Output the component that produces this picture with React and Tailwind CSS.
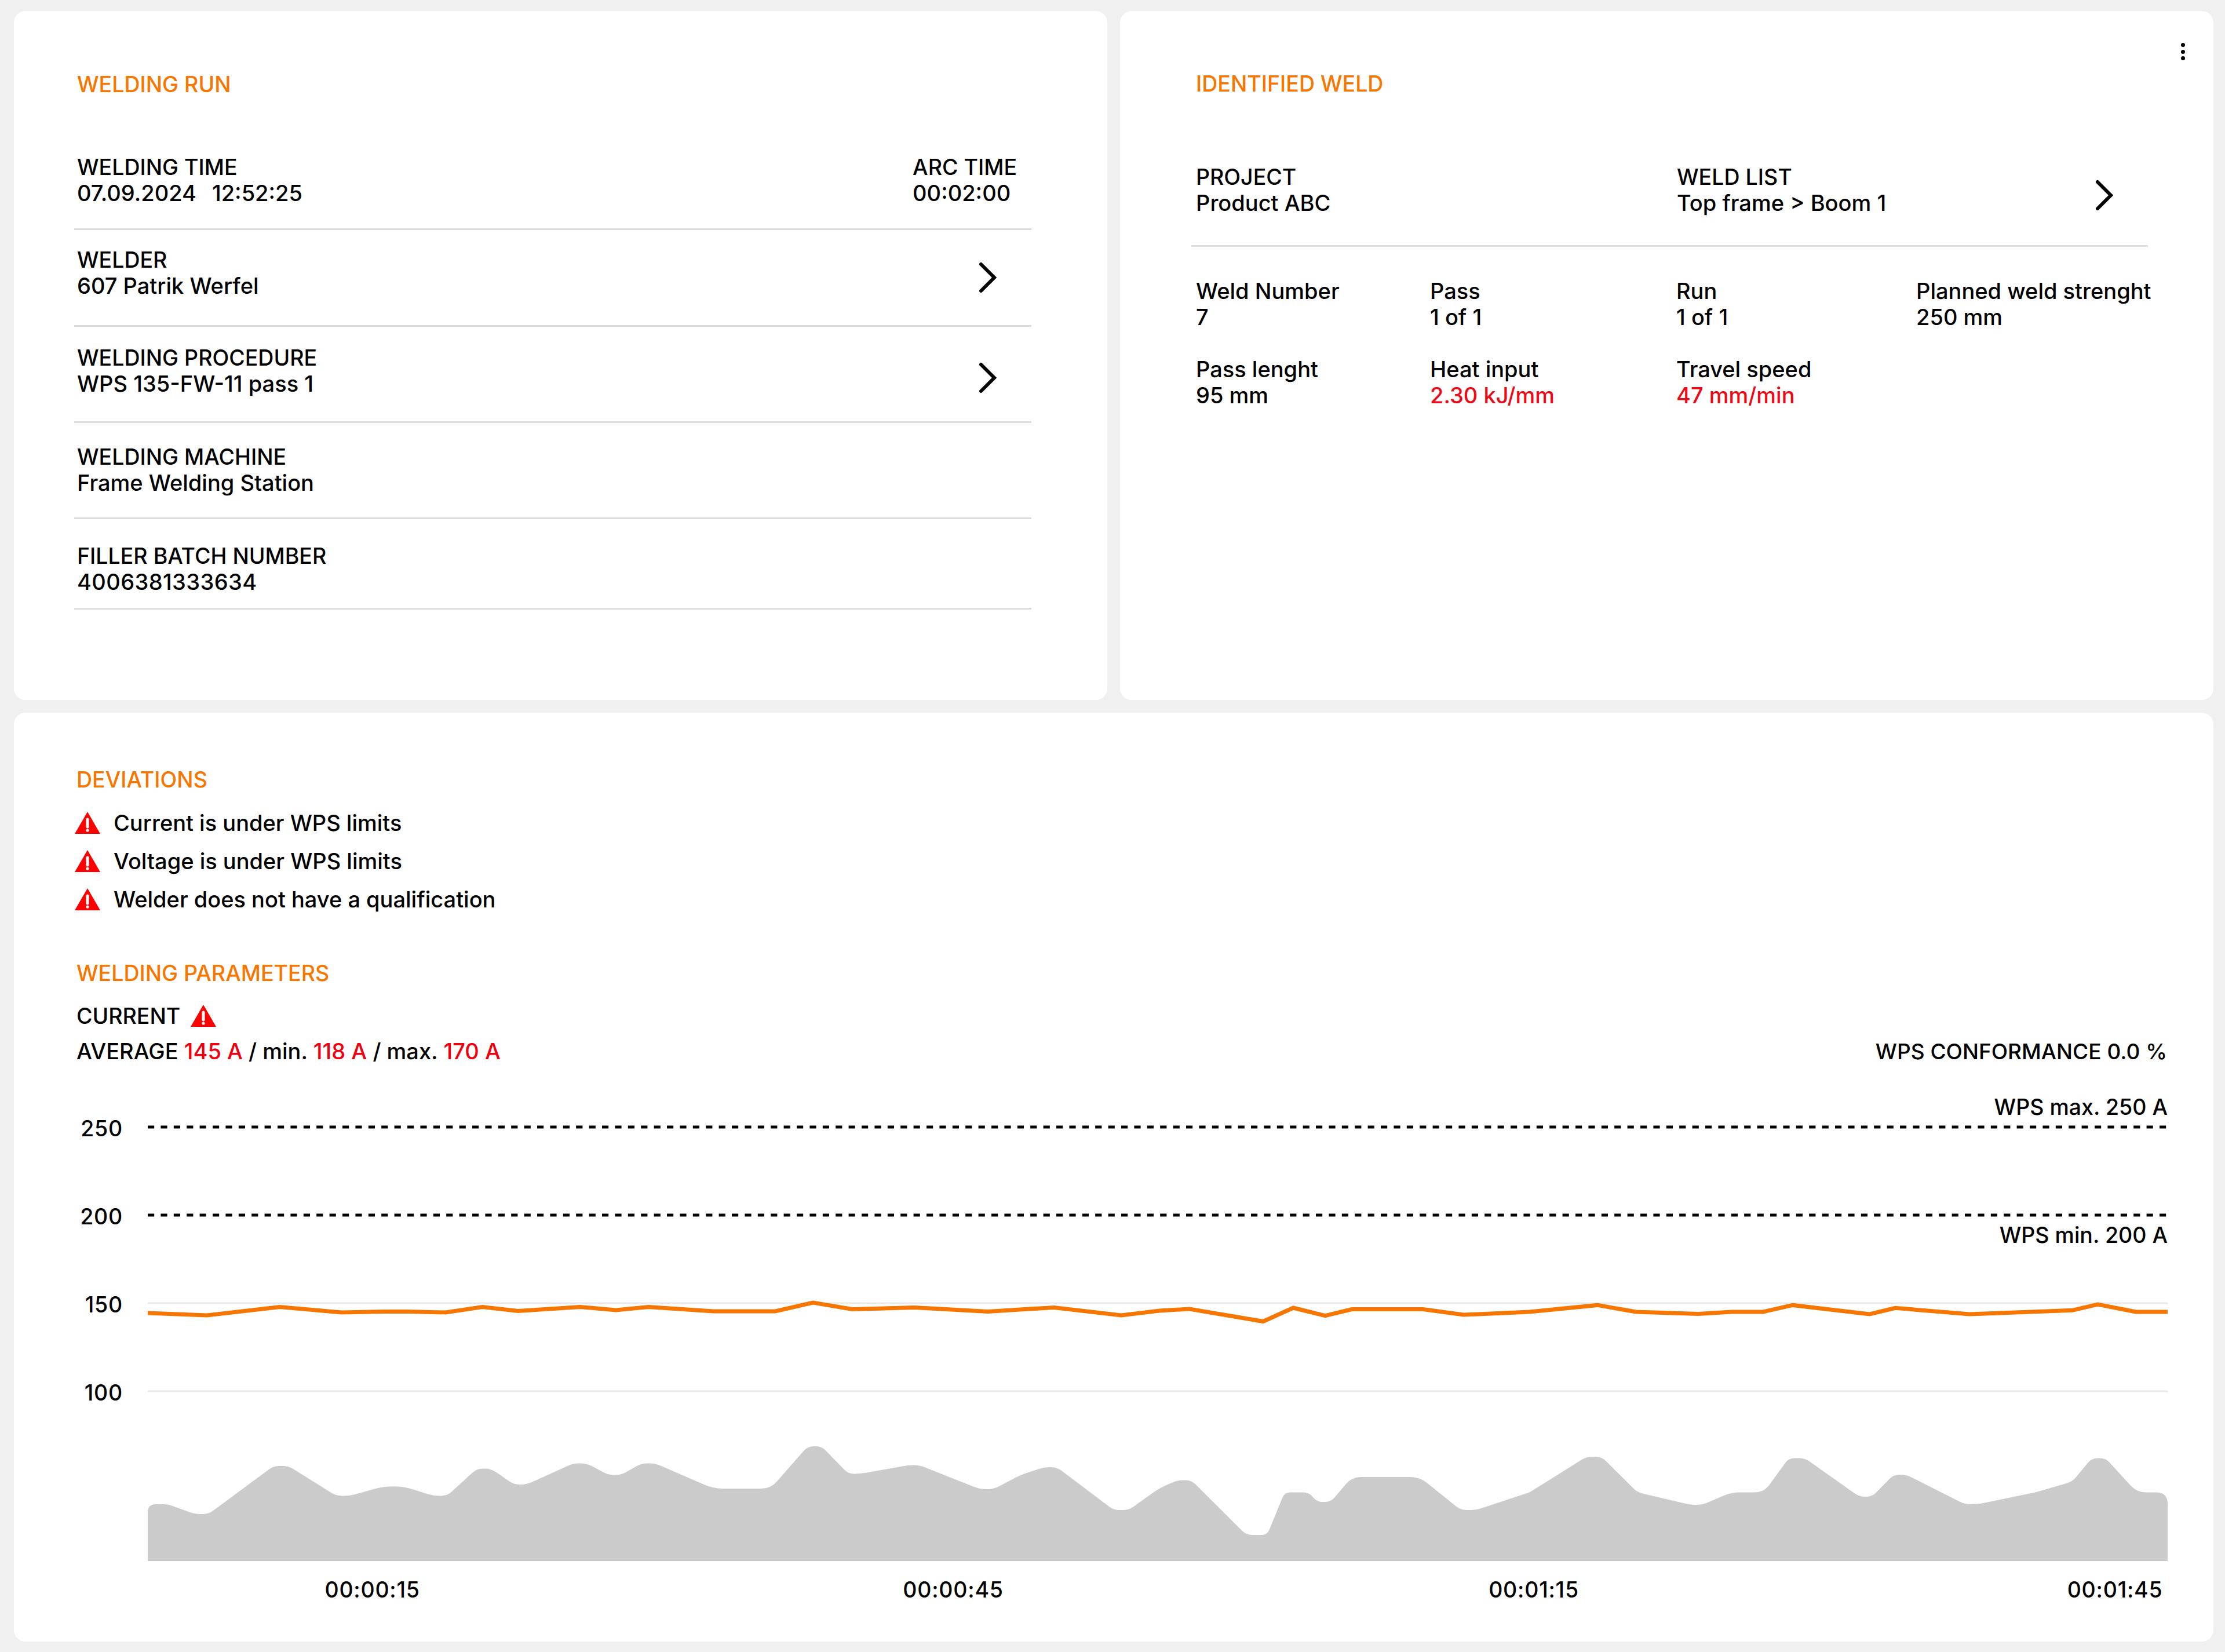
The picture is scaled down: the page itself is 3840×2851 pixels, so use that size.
const linePoints = [
  [255, 2266], [357, 2270], [483, 2255.5], [589, 2265], [663, 2263.5], [705, 2263.5], [769, 2265], [832.5, 2255.5],
  [894, 2262.6], [1001, 2255.5], [1063, 2261], [1119, 2255.5], [1231, 2263], [1338, 2263], [1403, 2248], [1471, 2259.5],
  [1578.5, 2256.4], [1705, 2263.5], [1819, 2256.4], [1935, 2270], [2001, 2262], [2053, 2259], [2180, 2280.5], [2232, 2257],
  [2287, 2270.7], [2333, 2259.5], [2456, 2259.5], [2526, 2269], [2639.5, 2264], [2757, 2252.4], [2823.6, 2264], [2931, 2267.6],
  [2988, 2264], [3042.5, 2264], [3094, 2252.4], [3226.6, 2268], [3271, 2257.3], [3399, 2268], [3576.5, 2261.3], [3620.4, 2251],
  [3686, 2264], [3741, 2264],
];

// flat little top or bottom of the grey shape
const bump = (x, y, w = 12) => [[x - w, y], [x + w, y]];

// x, y and optionally a corner radius
const areaPoints = [
  [255, 2694], [255, 2596, 14], [290, 2596],
  ...bump(348, 2613), ...bump(485, 2530, 13), ...bump(592, 2581.4), [680, 2560, 60], ...bump(760, 2581.4),
  ...bump(835, 2534.4), ...bump(898, 2562, 11), ...bump(1001, 2525.5), ...bump(1061, 2545.6, 11), ...bump(1119, 2525.5),
  [1231, 2569, 16], [1330, 2569, 16], ...bump(1406, 2496), ...bump(1475, 2543.4, 11), ...bump(1577, 2528.6, 10),
  ...bump(1703, 2570), [1761, 2545.6, 10], ...bump(1813, 2532, 11), ...bump(1935, 2606, 13), [2000, 2569, 10],
  ...bump(2044, 2554.5), ...bump(2169, 2649, 18), ...bump(2238, 2575.6, 21), ...bump(2285, 2592), [2333, 2549, 16], [2450, 2549, 16],
  ...bump(2534, 2606, 13), [2639.5, 2575.6, 4], ...bump(2751, 2514, 13), [2826, 2575.6, 10], ...bump(2928, 2597, 10),
  [2988, 2575.6, 14], [3044, 2575.6, 16], ...bump(3101, 2516.6, 14), ...bump(3220, 2583, 11), ...bump(3279, 2545, 11),
  ...bump(3402, 2596, 11), [3512, 2575.6, 8], [3576.5, 2557, 10], ...bump(3622, 2516.6), [3688, 2575.6, 16],
  [3741, 2575.6, 20], [3741, 2694],
];

// rounds every inner corner of a polygon, recharts-monotone look without the data
function roundedPath(points, radius) {
  let d = `M${points[0][0]} ${points[0][1]}`;
  for (let i = 1; i < points.length - 1; i++) {
    const [px, py] = points[i - 1];
    const [cx, cy, own] = points[i];
    const [nx, ny] = points[i + 1];
    const r = own ?? radius;
    const lenA = Math.hypot(px - cx, py - cy);
    const lenB = Math.hypot(nx - cx, ny - cy);
    const cutA = Math.min(r, lenA / 2);
    const cutB = Math.min(r, lenB / 2);
    const ax = cx + ((px - cx) / lenA) * cutA;
    const ay = cy + ((py - cy) / lenA) * cutA;
    const bx = cx + ((nx - cx) / lenB) * cutB;
    const by = cy + ((ny - cy) / lenB) * cutB;
    d += ` L${ax} ${ay} Q${cx} ${cy} ${bx} ${by}`;
  }
  const last = points[points.length - 1];
  return `${d} L${last[0]} ${last[1]} Z`;
}

function SectionTitle({ children, className = "" }) {
  return <h2 className={`text-[#f67600] font-medium ${className}`}>{children}</h2>;
}

function Chevron({ className = "" }) {
  return (
    <svg viewBox="0 0 32 54" className={`w-[32px] h-[54px] shrink-0 ${className}`}>
      <path d="M4 4 L27 27 L4 50" fill="none" stroke="#000" strokeWidth="6" strokeLinecap="round" strokeLinejoin="miter" />
    </svg>
  );
}

function Warning({ className = "" }) {
  return (
    <svg viewBox="0 0 44 38" className={`w-[44px] h-[38px] shrink-0 ${className}`}>
      <path d="M22 0 L44 38 L0 38 Z" fill="#ff0000" />
      <path d="M22 13 L22 26" stroke="#fff" strokeWidth="5" strokeLinecap="round" />
      <circle cx="22" cy="32" r="2.6" fill="#fff" />
    </svg>
  );
}

function Field({ label, value, valueClass = "" }) {
  return (
    <div className="whitespace-nowrap">
      <div>{label}</div>
      <div className={`text-[38px] ${valueClass}`}>{value}</div>
    </div>
  );
}

function WeldingRun() {
  return (
    <section className="bg-white rounded-[20px] w-[1887px] h-[1189px] pt-[103.5px] pl-[104px]">
      <SectionTitle className="pl-[5px]">WELDING RUN</SectionTitle>
      <div className="w-[1652px] mt-[98px]">
        <div className="flex justify-between pl-[5px] pr-[25px] pb-[38px] border-b-[3px] border-[#dcdcdc]">
          <Field
            label="WELDING TIME"
            value={<>07.09.2024<span className="ml-[27px]">12:52:25</span></>}
          />
          <Field label="ARC TIME" value="00:02:00" />
        </div>
        <div className="flex justify-between pl-[5px] pr-[59px] pt-[29px] pb-[45px] border-b-[3px] border-[#dcdcdc]">
          <Field label="WELDER" value="607 Patrik Werfel" />
          <Chevron className="mt-[26px]" />
        </div>
        <div className="flex justify-between pl-[5px] pr-[59px] pt-[31px] pb-[42px] border-b-[3px] border-[#dcdcdc]">
          <Field label="WELDING PROCEDURE" value="WPS 135-FW-11 pass 1" />
          <Chevron className="mt-[30px]" />
        </div>
        <div className="pl-[5px] pt-[36px] pb-[37px] border-b-[3px] border-[#dcdcdc]">
          <Field label="WELDING MACHINE" value="Frame Welding Station" />
        </div>
        <div className="pl-[5px] pt-[41px] pb-[22px] border-b-[3px] border-[#dcdcdc]">
          <Field label="FILLER BATCH NUMBER" value="4006381333634" valueClass="tracking-[0.01em]" />
        </div>
      </div>
    </section>
  );
}

function IdentifiedWeld() {
  return (
    <section className="relative bg-white rounded-[20px] w-[1887px] h-[1189px] pt-[103px] pl-[123px]">
      <button className="absolute top-[55px] right-[49px] flex flex-col gap-[4.5px]">
        <span className="w-[7px] h-[7px] rounded-full bg-black" />
        <span className="w-[7px] h-[7px] rounded-full bg-black" />
        <span className="w-[7px] h-[7px] rounded-full bg-black" />
      </button>
      <SectionTitle className="pl-[8px]">IDENTIFIED WELD</SectionTitle>
      <div className="w-[1651px] mt-[116px]">
        <div className="flex items-start pl-[8px] pr-[59px] pb-[50px] border-b-[3px] border-[#dcdcdc]">
          <div className="w-[830px]">
            <Field label="PROJECT" value="Product ABC" />
          </div>
          <Field label="WELD LIST" value="Top frame > Boom 1" />
          <Chevron className="ml-auto mt-[27px]" />
        </div>
        <div className="grid grid-cols-[404px_425px_414px_auto] gap-y-[45px] pl-[8px] pt-[54px] text-[38px]">
          <Field label="Weld Number" value="7" />
          <Field label="Pass" value="1 of 1" />
          <Field label="Run" value="1 of 1" />
          <Field label="Planned weld strenght" value="250 mm" />
          <Field label="Pass lenght" value="95 mm" />
          <Field label="Heat input" value="2.30 kJ/mm" valueClass="text-[#eb0a17]" />
          <Field label="Travel speed" value="47 mm/min" valueClass="text-[#eb0a17]" />
        </div>
      </div>
    </section>
  );
}

function CurrentChart() {
  const ticks = [
    { label: "250", y: 1945, dashed: true },
    { label: "200", y: 2097, dashed: true },
    { label: "150", y: 2249 },
    { label: "100", y: 2401 },
  ];
  const times = [
    ["00:00:15", 642.6],
    ["00:00:45", 1645],
    ["00:01:15", 2647],
    ["00:01:45", 3650],
  ];
  return (
    <svg viewBox="132 1880 3608 900" className="block w-[3608px] h-[900px] mt-[43.5px] overflow-visible text-[37.5px] font-medium">
      <path d={roundedPath(areaPoints, 10)} fill="#cbcbcb" />
      {ticks.map((tick) => (
        <g key={tick.label}>
          <line
            x1="255"
            x2="3741"
            y1={tick.y}
            y2={tick.y}
            stroke={tick.dashed ? "#000" : "#e8e8e8"}
            strokeWidth={tick.dashed ? 5 : 3}
            strokeDasharray={tick.dashed ? "11.2 11.2" : undefined}
          />
          <text x="212" y={tick.y + 16} textAnchor="end" className="tracking-[0.02em]">{tick.label}</text>
        </g>
      ))}
      <polyline points={linePoints.map((p) => p.join(",")).join(" ")} fill="none" stroke="#f67600" strokeWidth="7" strokeLinejoin="miter" />
      <text x="3741" y="1924" textAnchor="end">WPS max. 250 A</text>
      <text x="3741" y="2145" textAnchor="end">WPS min. 200 A</text>
      {times.map(([label, x]) => (
        <text key={label} x={x} y="2757" textAnchor="middle" className="tracking-[0.02em]">{label}</text>
      ))}
    </svg>
  );
}

function Deviations() {
  const items = ["Current is under WPS limits", "Voltage is under WPS limits", "Welder does not have a qualification"];
  return (
    <section className="bg-white rounded-[20px] w-[3796px] h-[1603px] pt-[92.5px] pl-[108px] pr-[80px]">
      <SectionTitle>DEVIATIONS</SectionTitle>
      <ul className="mt-[30px] flex flex-col gap-[21px] text-[38px]">
        {items.map((item) => (
          <li key={item} className="flex items-center gap-[23px] -ml-[3px]">
            <Warning />
            {item}
          </li>
        ))}
      </ul>
      <SectionTitle className="mt-[82px]">WELDING PARAMETERS</SectionTitle>
      <div className="flex items-center gap-[18px] mt-[29px]">
        CURRENT <Warning />
      </div>
      <div className="flex justify-between mt-[16px]">
        <div className="whitespace-pre text-[38px]">
          AVERAGE <span className="text-[#f0000f]">145 A</span> / min. <span className="text-[#f0000f]">118 A</span> / max. <span className="text-[#f0000f]">170 A</span>
        </div>
        <div className="text-[37px]">WPS CONFORMANCE 0.0 %</div>
      </div>
      <CurrentChart />
    </section>
  );
}

export default function App() {
  return (
    <div className="min-h-screen bg-[#f0f0f0] pl-[24px] pt-[19px] font-['Inter',sans-serif] font-medium text-[37.5px] leading-[45px] text-black">
      <div className="flex gap-[22px]">
        <WeldingRun />
        <IdentifiedWeld />
      </div>
      <div className="mt-[22px]">
        <Deviations />
      </div>
    </div>
  );
}
